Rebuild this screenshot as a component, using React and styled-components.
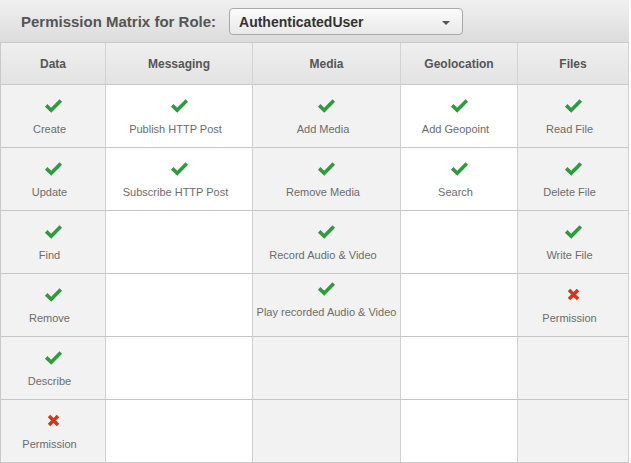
import React from "react";
import styled, { createGlobalStyle } from "styled-components";

const Global = createGlobalStyle`
  html, body { margin: 0; padding: 0; background: #ffffff; }
  body { font-family: "Liberation Sans", Arial, sans-serif; }
`;

const Wrap = styled.div`
  width: 629px;
`;

const Bar = styled.div`
  height: 43px;
  box-sizing: border-box;
  border-bottom: 1px solid #c9c9c9;
  background: linear-gradient(#f1f1f1, #dcdcdc);
  display: flex;
  align-items: center;
  padding-left: 21px;
  gap: 13px;
`;

const Title = styled.span`
  font-size: 15px;
  font-weight: bold;
  color: #555555;
`;

const Select = styled.div`
  box-sizing: border-box;
  width: 234px;
  height: 27px;
  margin-top: 1px;
  border: 1px solid #a8a8a8;
  border-radius: 4px;
  background: linear-gradient(#fbfbfb, #e9e9e9);
  display: flex;
  align-items: center;
  justify-content: space-between;
  padding: 0 12px 0 9px;
`;

const SelectText = styled.span`
  font-size: 14px;
  font-weight: bold;
  color: #333333;
`;

const Caret = styled.span`
  width: 0;
  height: 0;
  border-left: 4px solid transparent;
  border-right: 4px solid transparent;
  border-top: 4px solid #555555;
  margin-top: 2px;
`;

const Grid = styled.div`
  display: grid;
  grid-template-columns: 105px 147px 148px 117px 111px;
  grid-template-rows: 42px repeat(6, 63px);
  border-left: 1px solid #c9c9c9;
`;

const HeadCell = styled.div`
  box-sizing: border-box;
  background: linear-gradient(#efefef, #e3e3e3);
  border-right: 1px solid #d2d2d2;
  border-bottom: 1px solid #c9c9c9;
  display: flex;
  align-items: center;
  justify-content: center;
  font-size: 12px;
  font-weight: bold;
  color: #555555;
`;

const Cell = styled.div`
  box-sizing: border-box;
  background: ${(p) => (p.$shade ? "#f2f2f2" : "#ffffff")};
  border-right: 1px solid #d0d0d0;
  border-bottom: 1px solid #c6c6c6;
  display: flex;
  flex-direction: column;
  align-items: center;
  padding-top: ${(p) => (p.$raised ? 6 : 12)}px;
`;

const Label = styled.div`
  margin-top: 10px;
  margin-right: ${(p) => (p.$wide ? 0 : 7)}px;
  font-size: 11px;
  color: #6c6c6c;
  white-space: nowrap;
  line-height: 13px;
`;

const IconBox = styled.div`
  height: 16px;
  display: flex;
  align-items: center;
  justify-content: center;
`;

const Check = () => (
  <svg width="19" height="15" viewBox="0 0 19 15">
    <polyline
      points="2.2,7.4 7.2,12.2 16.8,2.4"
      fill="none"
      stroke="#2e9b3f"
      strokeWidth="3.6"
      strokeLinecap="butt"
      strokeLinejoin="miter"
    />
  </svg>
);

const Cross = () => (
  <svg width="13" height="13" viewBox="0 0 13 13">
    <path
      d="M2 2 L11 11 M11 2 L2 11"
      fill="none"
      stroke="#d4351c"
      strokeWidth="3.4"
    />
  </svg>
);

const columns = [
  {
    name: "Data",
    items: [
      ["Create", true],
      ["Update", true],
      ["Find", true],
      ["Remove", true],
      ["Describe", true],
      ["Permission", false],
    ],
  },
  {
    name: "Messaging",
    items: [
      ["Publish HTTP Post", true],
      ["Subscribe HTTP Post", true],
    ],
  },
  {
    name: "Media",
    items: [
      ["Add Media", true],
      ["Remove Media", true],
      ["Record Audio & Video", true],
      ["Play recorded Audio & Video", true, true],
    ],
  },
  {
    name: "Geolocation",
    items: [
      ["Add Geopoint", true],
      ["Search", true],
    ],
  },
  {
    name: "Files",
    items: [
      ["Read File", true],
      ["Delete File", true],
      ["Write File", true],
      ["Permission", false],
    ],
  },
];

export default function App() {
  const rows = [0, 1, 2, 3, 4, 5];
  return (
    <Wrap>
      <Global />
      <Bar>
        <Title>Permission Matrix for Role:</Title>
        <Select>
          <SelectText>AuthenticatedUser</SelectText>
          <Caret />
        </Select>
      </Bar>
      <Grid>
        {columns.map((c) => (
          <HeadCell key={c.name}>{c.name}</HeadCell>
        ))}
        {rows.map((r) =>
          columns.map((c, ci) => {
            const it = c.items[r];
            return (
              <Cell key={c.name + r} $shade={ci % 2 === 0} $raised={it && it[2]}>
                {it && (
                  <>
                    <IconBox>{it[1] ? <Check /> : <Cross />}</IconBox>
                    <Label $wide={it[2]}>{it[0]}</Label>
                  </>
                )}
              </Cell>
            );
          })
        )}
      </Grid>
    </Wrap>
  );
}
